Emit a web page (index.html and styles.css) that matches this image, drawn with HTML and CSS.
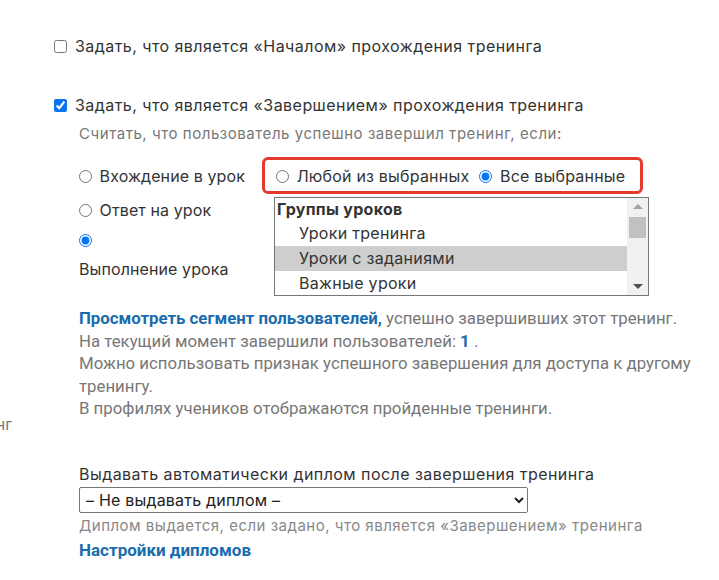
FILE: index.html
```html
<!DOCTYPE html>
<html lang="ru">
<head>
  <meta charset="UTF-8">
  <meta name="viewport" content="width=device-width, initial-scale=1.0">
  <title>Настройки тренинга</title>
  <link rel="stylesheet" href="styles.css">
</head>
<body>

  <div class="settings">
    <!-- Start of training -->
    <label class="check-row first">
      <input type="checkbox"> Задать, что является «Началом» прохождения тренинга
    </label>

    <!-- Finish of training -->
    <label class="check-row second">
      <input type="checkbox" checked> Задать, что является «Завершением» прохождения тренинга
    </label>

    <div class="finish-block">
      <div class="hint">Считать, что пользователь успешно завершил тренинг, если:</div>

      <div class="conditions">
        <div class="condition-types">
          <label class="radio-row"><input type="radio" name="ctype"> Вхождение в урок</label>
          <label class="radio-row"><input type="radio" name="ctype"> Ответ на урок</label>
          <label class="radio-row stacked"><input type="radio" name="ctype" checked> <span class="radio-text">Выполнение урока</span></label>
        </div>

        <div class="condition-lessons">
          <div class="mode-box">
            <label class="radio-row inline"><input type="radio" name="mode"> Любой из выбранных</label>
            <label class="radio-row inline"><input type="radio" name="mode" checked> Все выбранные</label>
          </div>

          <!-- lesson list with its own scrollbar -->
          <div class="lessons">
            <div class="lessons-list">
              <div class="lessons-group">Группы уроков</div>
              <div class="lessons-item">Уроки тренинга</div>
              <div class="lessons-item selected">Уроки с заданиями</div>
              <div class="lessons-item">Важные уроки</div>
            </div>
            <div class="scrollbar">
              <div class="scroll-btn up"></div>
              <div class="scroll-track">
                <div class="scroll-thumb"></div>
              </div>
              <div class="scroll-btn down"></div>
            </div>
          </div>
        </div>
      </div>

      <div class="notes">
        <div><a href="#" class="link">Просмотреть сегмент пользователей,</a> успешно завершивших этот тренинг.</div>
        <div>На текущий момент завершили пользователей: <a href="#" class="link">1</a> .</div>
        <div>Можно использовать признак успешного завершения для доступа к другому тренингу.</div>
        <div>В профилях учеников отображаются пройденные тренинги.</div>
      </div>
    </div>

    <!-- label of the neighbouring column, scrolled off to the left -->
    <div class="side-label"><span>тренинг</span></div>

    <!-- Diploma -->
    <div class="diploma">
      <div class="field-title">Выдавать автоматически диплом после завершения тренинга</div>
      <select class="diploma-select">
        <option>– Не выдавать диплом –</option>
      </select>
      <div class="field-hint">Диплом выдается, если задано, что является «Завершением» тренинга</div>
      <a href="#" class="link">Настройки дипломов</a>
    </div>
  </div>

</body>
</html>
```

FILE: styles.css
```css
* {
  box-sizing: border-box;
}

body {
  margin: 0;
  background: #ffffff;
  color: #333333;
  font-family: Inter, "Noto Sans", sans-serif;
  font-size: 16px;
  letter-spacing: 0.45px;
  overflow-x: hidden;
}

.settings {
  padding: 36px 0 0 54px;
}

input[type="checkbox"],
input[type="radio"] {
  width: 13px;
  height: 13px;
  margin: 0 3px 0 0;
  vertical-align: -1px;
  accent-color: #0b75f0;
}

.check-row {
  display: block;
  line-height: 20px;
}

.check-row.second {
  margin-top: 39px;
}

/* Finish block */
.finish-block {
  padding-left: 25px;
}

.hint {
  margin-top: 9px;
  color: #777777;
  font-size: 15px;
  letter-spacing: 0.55px;
  line-height: 20px;
}

.conditions {
  display: flex;
  margin-top: 13px;
}

.condition-types {
  width: 183px;
  padding-top: 9px;
  letter-spacing: 0.1px;
}

.radio-row {
  display: block;
  line-height: 20px;
  margin-bottom: 14px;
}

.radio-row.stacked {
  margin-top: -4px;
  margin-bottom: 0;
}

.radio-row.stacked .radio-text {
  display: block;
  margin-top: 9px;
}

.mode-box {
  display: flex;
  width: 381px;
  height: 37px;
  padding: 6px 11px 0;
  border: 3px solid #e53a2f;
  border-radius: 6px;
  letter-spacing: 0.2px;
  white-space: nowrap;
}

.radio-row.inline {
  margin: 0 10px 0 0;
}

/* Lessons list */
.lessons {
  display: flex;
  width: 375px;
  height: 99px;
  margin: 3px 0 0 12px;
  border: 1px solid #767676;
  overflow: hidden;
  letter-spacing: 0.3px;
}

.lessons-list {
  flex: 1;
}

.lessons-group {
  height: 23px;
  padding-left: 2px;
  line-height: 23px;
  font-weight: 700;
}

.lessons-item {
  height: 25px;
  padding-left: 24px;
  line-height: 25px;
}

.lessons-item.selected {
  background: #cecece;
}

.scrollbar {
  display: flex;
  flex-direction: column;
  width: 21px;
  padding: 0 2px;
  background: #f1f1f1;
}

.scroll-btn {
  display: flex;
  justify-content: center;
  align-items: center;
  height: 17px;
}

.scroll-btn::before {
  content: "";
  border-left: 5px solid transparent;
  border-right: 5px solid transparent;
}

.scroll-btn.up::before {
  border-bottom: 5px solid #a3a3a3;
}

.scroll-btn.down::before {
  border-top: 5px solid #505050;
}

.scroll-track {
  flex: 1;
}

.scroll-thumb {
  height: 21px;
  margin-top: 2px;
  background: #c1c1c1;
}

/* Notes below the lessons list */
.notes {
  margin-top: 11px;
  color: #777777;
  font-family: Roboto, sans-serif;
  font-size: 16.8px;
  letter-spacing: 0;
  line-height: 22.5px;
  max-width: 625px;
}

.link {
  color: #1a6cad;
  font-weight: 700;
  text-decoration: none;
}

.side-label {
  display: flex;
  justify-content: flex-end;
  width: 12px;
  margin: -5px 0 0 -54px;
  overflow: hidden;
  white-space: nowrap;
  color: #777777;
  font-family: Roboto, sans-serif;
  font-size: 16px;
  letter-spacing: 0;
  line-height: 20px;
}

/* Diploma */
.diploma {
  margin-top: 29px;
  padding-left: 25px;
}

.field-title {
  line-height: 20px;
}

.diploma-select {
  display: block;
  width: 449px;
  height: 26px;
  margin-top: 3px;
  padding: 0 2px;
  border: 1px solid #767676;
  border-radius: 2px;
  background: #ffffff;
  font-family: Inter, "Noto Sans", sans-serif;
  font-size: 16px;
  letter-spacing: 0.2px;
  color: #222222;
}

.field-hint {
  margin-top: 3px;
  color: #888888;
  font-size: 15px;
  letter-spacing: 0.5px;
  line-height: 20px;
}

.diploma .link {
  display: block;
  margin-top: 4px;
  font-family: Roboto, sans-serif;
  font-size: 17px;
  letter-spacing: 0;
  line-height: 20px;
}
```
